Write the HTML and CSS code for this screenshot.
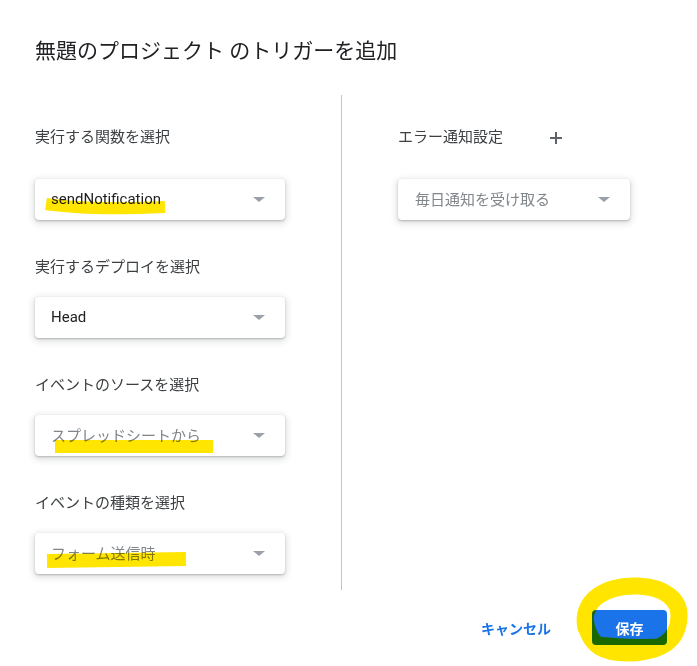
FILE: index.html
```html
<!DOCTYPE html>
<html lang="ja">
<head>
    <meta charset="UTF-8">
    <meta name="viewport" content="width=device-width, initial-scale=1.0">
    <title>トリガーを追加</title>
    <link rel="stylesheet" href="styles.css">
</head>
<body>

    <div class="dialog">
        <h1 class="title">無題のプロジェクト のトリガーを追加</h1>

        <div class="content">
            <div class="col col-left">
                <div class="field">
                    <div class="label label-head">実行する関数を選択</div>
                    <div class="select"><span class="value">sendNotification</span><span class="arrow"></span></div>
                </div>
                <div class="field">
                    <div class="label">実行するデプロイを選択</div>
                    <div class="select"><span class="value">Head</span><span class="arrow"></span></div>
                </div>
                <div class="field">
                    <div class="label">イベントのソースを選択</div>
                    <div class="select"><span class="value muted">スプレッドシートから</span><span class="arrow"></span></div>
                </div>
                <div class="field">
                    <div class="label">イベントの種類を選択</div>
                    <div class="select"><span class="value muted">フォーム送信時</span><span class="arrow"></span></div>
                </div>
            </div>

            <div class="col col-right">
                <div class="field">
                    <div class="label label-head">
                        エラー通知設定
                        <svg class="plus" width="14" height="14" viewBox="0 0 14 14">
                            <path d="M7 1v12M1 7h12" stroke="#5f6368" stroke-width="2" fill="none"/>
                        </svg>
                    </div>
                    <div class="select select-narrow"><span class="value muted">毎日通知を受け取る</span><span class="arrow"></span></div>
                </div>
            </div>
        </div>

        <div class="actions">
            <button class="btn-text">キャンセル</button>
            <button class="btn-save">保存</button>
        </div>
    </div>

    <!-- marcas de resaltador -->
    <svg class="marker" width="697" height="666" viewBox="0 0 697 666">
        <path d="M46 204 C80 209 120 209 165 207" stroke="#ffe500" stroke-width="12" fill="none"/>
        <rect x="55" y="440" width="158" height="13" fill="#ffe500"/>
        <path d="M47 561 L186 559" stroke="#ffe500" stroke-width="14" fill="none"/>
        <path d="M586 628 C580 600 606 585 638 586 C665 587 680 600 679 617 C678 640 662 651 632 653 C606 654 588 648 585 618"
              stroke="#ffe500" stroke-width="17" fill="none" stroke-linecap="round"/>
        <path d="M592 639 C615 643 640 643 667 642" stroke="#ffe500" stroke-width="7" fill="none"/>
    </svg>

</body>
</html>
```

FILE: styles.css
```css
body {
    margin: 0;
    background-color: #fff;
    font-family: Roboto, "Noto Sans CJK JP", sans-serif;
    color: #202124;
}
.dialog {
    width: 697px;
    height: 666px;
}
.title {
    margin: 0;
    padding: 37px 35px 0;
    font-size: 21px;
    line-height: 28px;
    font-weight: 400;
}
.content {
    display: flex;
    margin-top: 30px;
}
.col {
    padding-top: 32px;
    padding-bottom: 16px;
}
.col-left {
    width: 250px;
    padding-left: 35px;
    padding-right: 56px;
    border-right: 1px solid #c4c4c4;
}
.col-right {
    padding-left: 56px;
}
.field + .field {
    margin-top: 37px;
}
.label {
    font-size: 15px;
    line-height: 20px;
    color: #3c4043;
    margin-bottom: 20px;
    display: flex;
    align-items: center;
}
.label-head {
    margin-bottom: 32px;
}
.plus {
    margin-left: 46px;
    margin-top: 2px;
}
.select {
    width: 250px;
    height: 41px;
    box-sizing: border-box;
    display: flex;
    align-items: center;
    justify-content: space-between;
    padding: 0 20px 2px 16px;
    border-radius: 4px;
    background-color: #fff;
    box-shadow: 0 1px 2px rgba(60,64,67,0.3), 0 2px 6px 2px rgba(60,64,67,0.15);
}
.select-narrow {
    width: 232px;
    padding-left: 17px;
}
.value {
    font-size: 15px;
    color: #202124;
}
.value.muted {
    color: #80868b;
}
.arrow {
    width: 0;
    height: 0;
    margin-top: 2px;
    border-left: 6px solid transparent;
    border-right: 6px solid transparent;
    border-top: 5px solid #9aa0a6;
}
.actions {
    display: flex;
    justify-content: flex-end;
    align-items: center;
    gap: 25px;
    margin-top: 20px;
    padding-right: 30px;
}
button {
    font-family: Roboto, "Noto Sans CJK JP", sans-serif;
    font-size: 14px;
    font-weight: 700;
    height: 35px;
    border: none;
    border-radius: 4px;
    cursor: pointer;
}
.btn-text {
    padding: 0 16px;
    background: none;
    color: #1a73e8;
}
.btn-save {
    width: 75px;
    background-color: #1a73e8;
    color: #fff;
}
.marker {
    position: absolute;
    left: 0;
    top: 0;
    mix-blend-mode: multiply;
    pointer-events: none;
}
```
